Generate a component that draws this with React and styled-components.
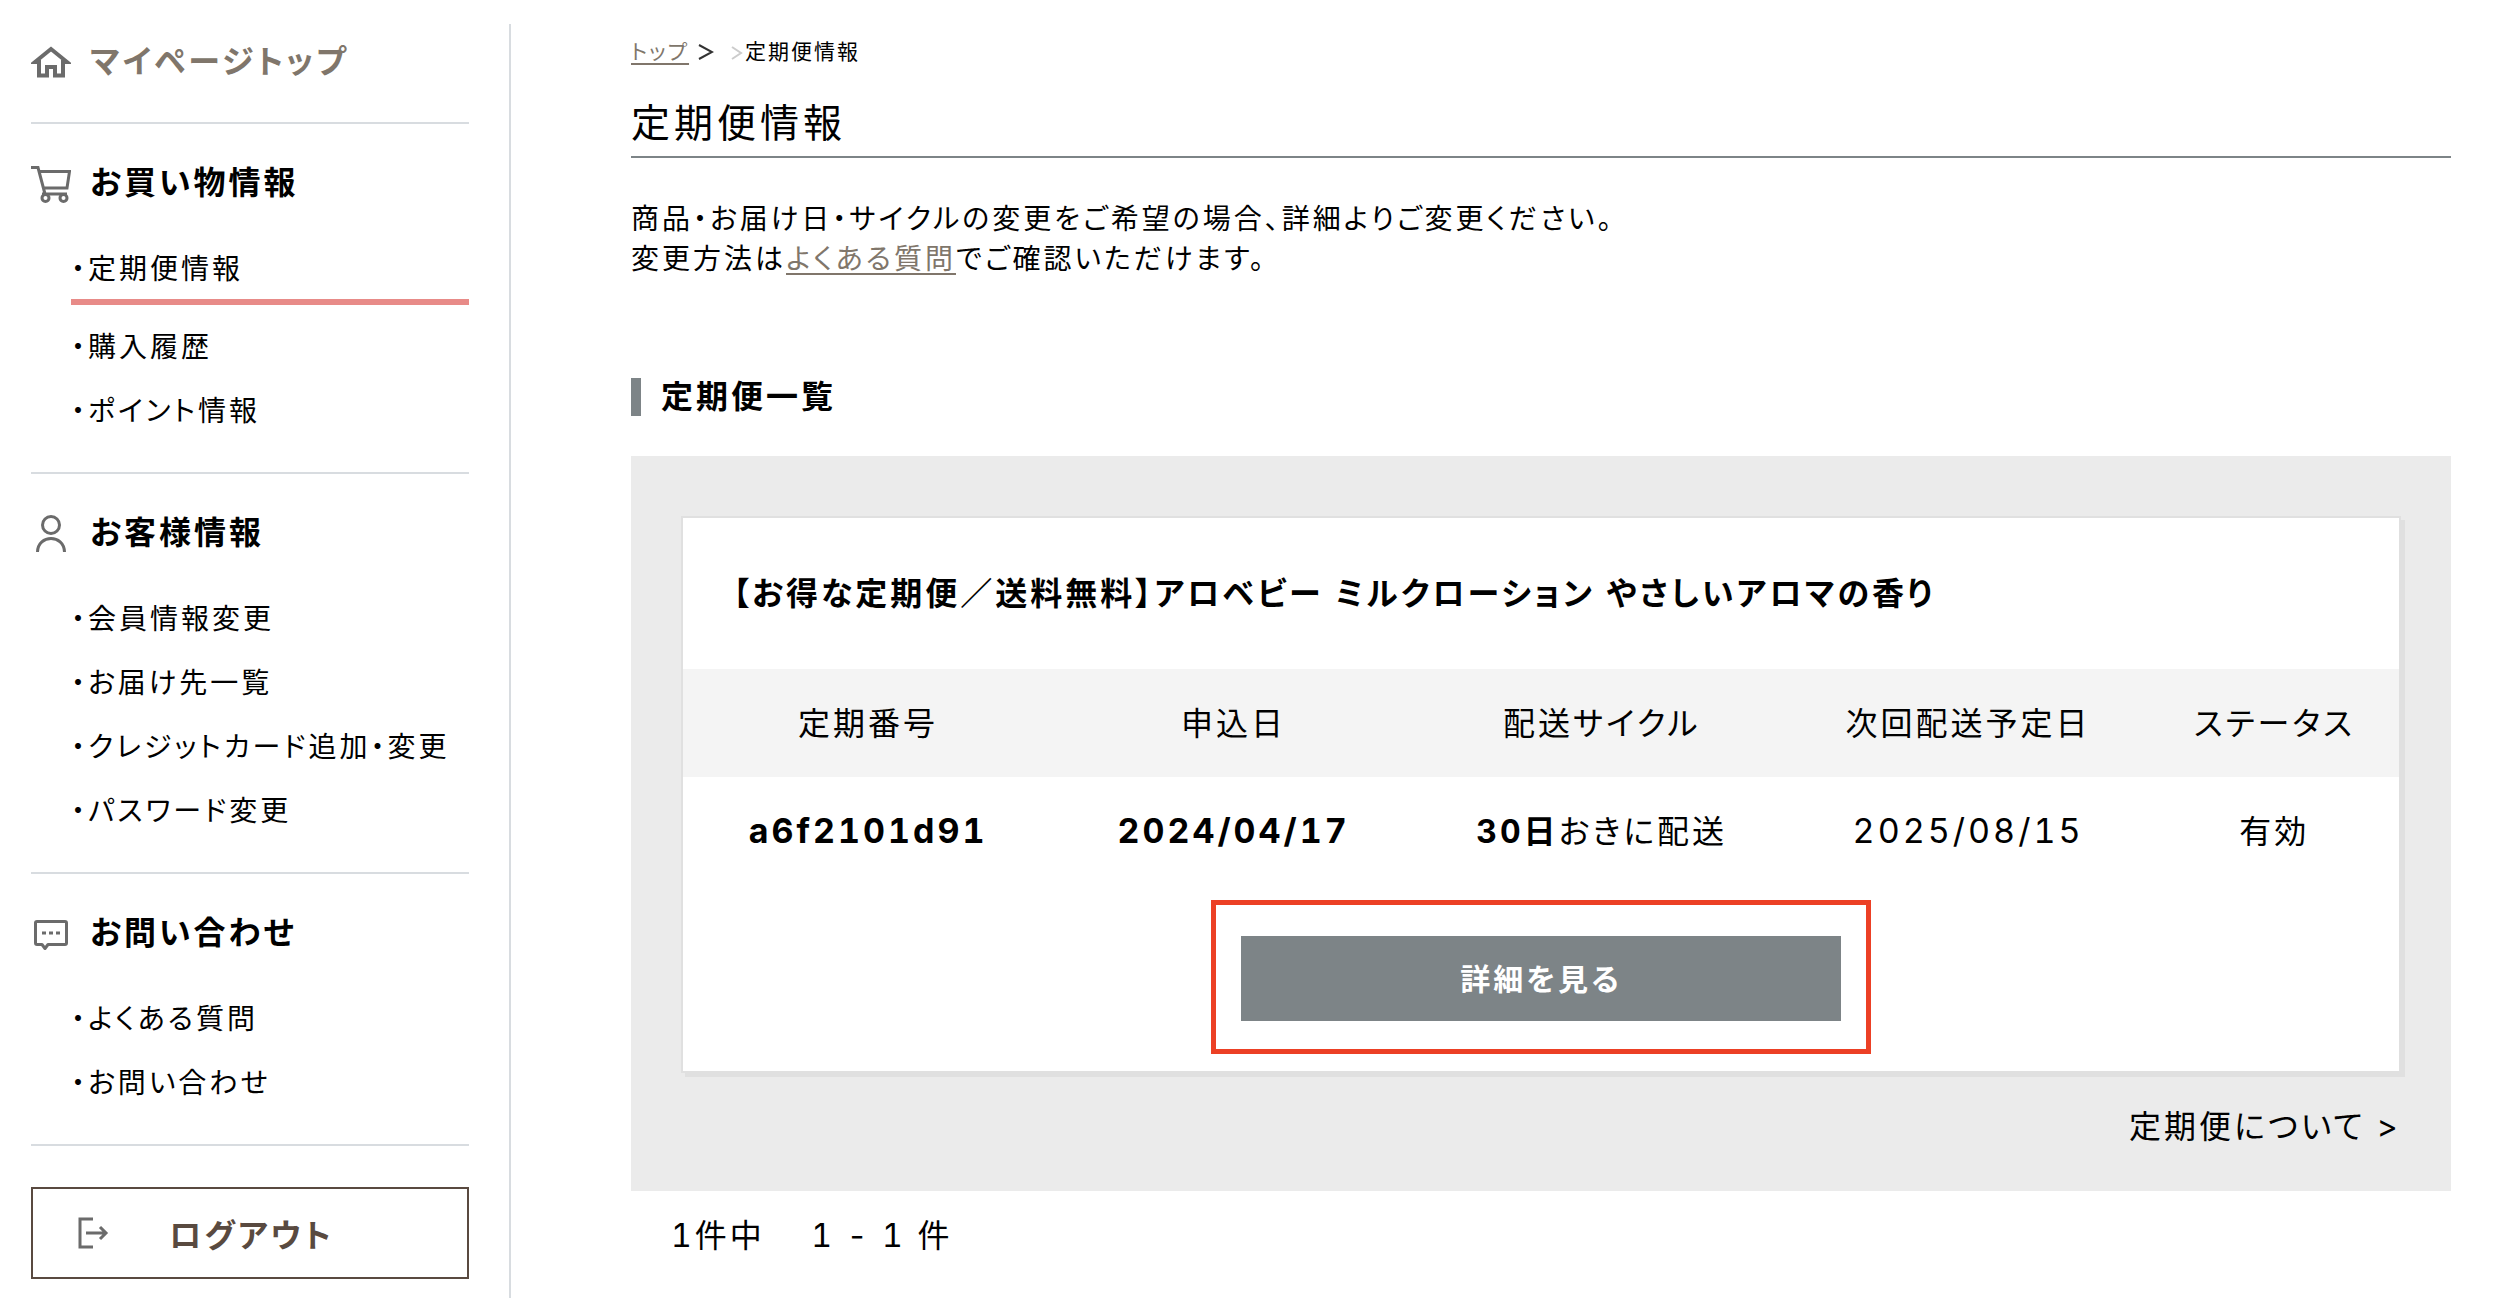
import React from "react";
import styled, { createGlobalStyle, css } from "styled-components";

const color = {
  text: "#000000",
  link: "#80766b",
  brown: "#594a40",
  slate: "#7d8487",
  line: "#d8dce0",
  active: "#e88b88",
  panel: "#ebebeb",
  edge: "#e0e0e0",
  head: "#f4f4f4",
  mark: "#ec4025",
  icon: "#6b6b6b",
};

const GlobalStyle = createGlobalStyle`
  *, *::before, *::after { box-sizing: border-box; }
  body {
    margin: 0;
    background: #fff;
    color: ${color.text};
    font-family: Inter, "Noto Sans CJK JP", sans-serif;
    font-size: 32px;
    font-feature-settings: "palt", "tnum";
    letter-spacing: 3px;
  }
`;

const Page = styled.div`
  display: flex;
  min-height: 100vh;
  padding-top: 24px;
`;

const Sidebar = styled.nav`
  flex: 0 0 511px;
  padding: 0 40px 16px 31px;
  border-right: 2px solid ${color.line};
`;

const Section = styled.section`
  padding: ${(p) => (p.$first ? "8px 0 30px" : "29px 0")};
  border-bottom: 2px solid ${color.line};
`;

const SectionTitle = styled.h2`
  display: flex;
  align-items: center;
  gap: 19px;
  margin: 0;
  font-size: 32px;
  line-height: 60px;
  font-weight: 700;

  a {
    color: ${color.link};
    text-decoration: none;
  }
`;

const IconSvg = styled.svg`
  flex: none;
  width: 40px;
  height: 40px;
  fill: none;
  stroke: ${color.icon};
  stroke-width: ${(p) => (p.$thin ? 3 : 4)};
`;

const Menu = styled.ul`
  list-style: none;
  margin: 24px 0 0 40px;
  padding: 0;
`;

const MenuLink = styled.a`
  display: block;
  padding: 16px 0;
  font-size: 28px;
  line-height: 32px;
  color: ${color.text};
  text-decoration: none;
  white-space: nowrap;
  ${(p) =>
    p.$active &&
    css`
      padding-bottom: 14px;
      border-bottom: 6px solid ${color.active};
      margin-bottom: 10px;
    `}
`;

const LogoutButton = styled.button`
  display: flex;
  align-items: center;
  gap: 56px;
  width: 100%;
  height: 92px;
  margin-top: 41px;
  padding: 0 40px;
  border: 2px solid ${color.brown};
  background: #fff;
  color: ${color.brown};
  font: inherit;
  font-weight: 700;
  letter-spacing: inherit;
  font-feature-settings: inherit;
`;

const Main = styled.main`
  flex: 1;
  min-width: 0;
  padding: 8px 63px 0 120px;
`;

const Breadcrumb = styled.nav`
  display: flex;
  align-items: center;
  font-size: 21px;
  line-height: 40px;
  letter-spacing: 2px;
`;

const TextLink = styled.a`
  color: ${color.link};
  text-decoration: underline;
  text-decoration-thickness: 2px;
  text-underline-offset: 4px;
`;

const Chevron = styled.svg`
  flex: none;
  width: ${(p) => (p.$faint ? 12 : 16)}px;
  height: 16px;
  margin-left: ${(p) => (p.$faint ? 17 : 9)}px;
  margin-right: ${(p) => (p.$faint ? 2 : 0)}px;
  fill: none;
  stroke: ${(p) => (p.$faint ? "#cccccc" : "#333333")};
  stroke-width: 2;
`;

const PageTitle = styled.h1`
  margin: 21px 0 0;
  padding: 0 0 3px;
  border-bottom: 2px solid ${color.slate};
  font-size: 39px;
  line-height: 60px;
  font-weight: 400;
  letter-spacing: 4px;
`;

const Lead = styled.p`
  margin: 41px 0 0;
  font-size: 28px;
  line-height: 40px;
`;

const ListTitle = styled.h2`
  margin: 99px 0 0;
  padding-left: 20px;
  border-left: 10px solid ${color.slate};
  font-size: 32px;
  line-height: 38px;
  font-weight: 700;
`;

const Panel = styled.div`
  margin-top: 40px;
  padding: 60px 50px 34px;
  background: ${color.panel};
`;

const Card = styled.article`
  border: 2px solid ${color.edge};
  background: #fff;
  box-shadow: 4px 4px 0 ${color.edge};
  padding-bottom: 17px;
`;

const ProductName = styled.h3`
  margin: 0;
  padding: 46px 50px 45px;
  font-size: 32px;
  line-height: 60px;
  font-weight: 700;
`;

const Table = styled.table`
  width: 100%;
  table-layout: fixed;
  border-collapse: collapse;
  text-align: center;
`;

const HeadCell = styled.th`
  width: ${(p) => p.$width};
  padding: 25px 0 23px 3px;
  background: ${color.head};
  line-height: 60px;
  font-weight: 400;
`;

const Cell = styled.td`
  padding: 24px 0 22px 3px;
  line-height: 60px;
  font-weight: ${(p) => (p.$bold ? 700 : 400)};
`;

const Digits = styled.span`
  font-size: 34px;
`;

const Highlight = styled.div`
  width: fit-content;
  margin: 16px auto 0;
  padding: 31px 25px 28px;
  border: 5px solid ${color.mark};
`;

const DetailButton = styled.button`
  display: block;
  width: 600px;
  height: 85px;
  padding: 0 0 4px;
  border: 0;
  background: ${color.slate};
  color: #fff;
  font: inherit;
  font-size: 30px;
  font-weight: 700;
  letter-spacing: inherit;
  font-feature-settings: inherit;
`;

const PanelFoot = styled.div`
  margin-top: 24px;
  text-align: right;
  line-height: 60px;
`;

const AboutLink = styled.a`
  color: ${color.text};
  text-decoration: none;
`;

const Count = styled.p`
  margin: 15px 0 0 40px;
  line-height: 60px;
  white-space: pre;
`;

const HomeIcon = () => (
  <IconSvg viewBox="0 0 40 40" aria-hidden="true">
    <path d="M20 7 L4 20 H8 V33.500 H16 V25 H24 V33.500 H32 V20 H36 Z" />
  </IconSvg>
);

const CartIcon = () => (
  <IconSvg $thin viewBox="0 0 40 40" aria-hidden="true">
    <path d="M0 4.500 H7 L14 31 M8.500 8.500 H38.500 L36 25 H12.500 M11 31 H36" />
    <circle cx="14.500" cy="35" r="3.500" />
    <circle cx="32.500" cy="35" r="3.500" />
  </IconSvg>
);

const UserIcon = () => (
  <IconSvg $thin viewBox="0 0 40 40" aria-hidden="true">
    <circle cx="20" cy="12" r="8.500" />
    <path d="M6.500 39 C7 21 33 21 33.500 39" />
  </IconSvg>
);

const ChatIcon = () => (
  <IconSvg $thin viewBox="0 0 40 40" aria-hidden="true">
    <path
      strokeLinejoin="round"
      d="M6 8.500 H34 Q35.500 8.500 35.500 10 V30 Q35.500 31.500 34 31.500 H17 L14 35.500 L11 31.500 H6 Q4.500 31.500 4.500 30 V10 Q4.500 8.500 6 8.500 Z"
    />
    <path strokeDasharray="4 3" d="M11 20 H29" />
  </IconSvg>
);

const LogoutIcon = () => (
  <IconSvg $thin viewBox="0 0 40 40" aria-hidden="true">
    <path d="M20 6 H7 V34 H20 M13 20 H32 M27 14 L33 20 L27 26" />
  </IconSvg>
);

const sections = [
  {
    title: "お買い物情報",
    Icon: CartIcon,
    items: ["定期便情報", "購入履歴", "ポイント情報"],
  },
  {
    title: "お客様情報",
    Icon: UserIcon,
    items: ["会員情報変更", "お届け先一覧", "クレジットカード追加・変更", "パスワード変更"],
  },
  {
    title: "お問い合わせ",
    Icon: ChatIcon,
    items: ["よくある質問", "お問い合わせ"],
  },
];

const columns = [
  { label: "定期番号", width: "21.4%" },
  { label: "申込日", width: "21.2%" },
  { label: "配送サイクル", width: "21.7%" },
  { label: "次回配送予定日", width: "21%" },
  { label: "ステータス", width: "14.7%" },
];

export default function App() {
  return (
    <>
      <GlobalStyle />
      <Page lang="ja">
        <Sidebar>
          <Section $first>
            <SectionTitle>
              <HomeIcon />
              <a href="#top">マイページトップ</a>
            </SectionTitle>
          </Section>
          {sections.map(({ title, Icon, items }) => (
            <Section key={title}>
              <SectionTitle>
                <Icon />
                {title}
              </SectionTitle>
              <Menu>
                {items.map((item) => (
                  <li key={item}>
                    <MenuLink href="#menu" $active={item === "定期便情報"}>
                      ・{item}
                    </MenuLink>
                  </li>
                ))}
              </Menu>
            </Section>
          ))}
          <LogoutButton type="button">
            <LogoutIcon />
            ログアウト
          </LogoutButton>
        </Sidebar>
        <Main>
          <Breadcrumb>
            <TextLink href="#top">トップ</TextLink>
            <Chevron viewBox="0 0 16 16" aria-hidden="true">
              <path d="M1 1 L14 8 L1 15" />
            </Chevron>
            <Chevron $faint viewBox="0 0 12 16" aria-hidden="true">
              <path d="M1 3 L10 9 L1 15" />
            </Chevron>
            <span>定期便情報</span>
          </Breadcrumb>
          <PageTitle>定期便情報</PageTitle>
          <Lead>
            商品・お届け日・サイクルの変更をご希望の場合、詳細よりご変更ください。
            <br />
            変更方法は<TextLink href="#faq">よくある質問</TextLink>でご確認いただけます。
          </Lead>
          <ListTitle>定期便一覧</ListTitle>
          <Panel>
            <Card>
              <ProductName>
                【お得な定期便／送料無料】アロベビー ミルクローション やさしいアロマの香り
              </ProductName>
              <Table>
                <thead>
                  <tr>
                    {columns.map((c) => (
                      <HeadCell key={c.label} scope="col" $width={c.width}>
                        {c.label}
                      </HeadCell>
                    ))}
                  </tr>
                </thead>
                <tbody>
                  <tr>
                    <Cell $bold>
                      <Digits>a6f2101d91</Digits>
                    </Cell>
                    <Cell $bold>
                      <Digits>2024/04/17</Digits>
                    </Cell>
                    <Cell>
                      <b>30日</b>おきに配送
                    </Cell>
                    <Cell>
                      <Digits>2025/08/15</Digits>
                    </Cell>
                    <Cell>有効</Cell>
                  </tr>
                </tbody>
              </Table>
              <Highlight>
                <DetailButton type="button">詳細を見る</DetailButton>
              </Highlight>
            </Card>
            <PanelFoot>
              <AboutLink href="#about">定期便について &gt;</AboutLink>
            </PanelFoot>
          </Panel>
          <Count>{"1件中　 1 - 1 件"}</Count>
        </Main>
      </Page>
    </>
  );
}
